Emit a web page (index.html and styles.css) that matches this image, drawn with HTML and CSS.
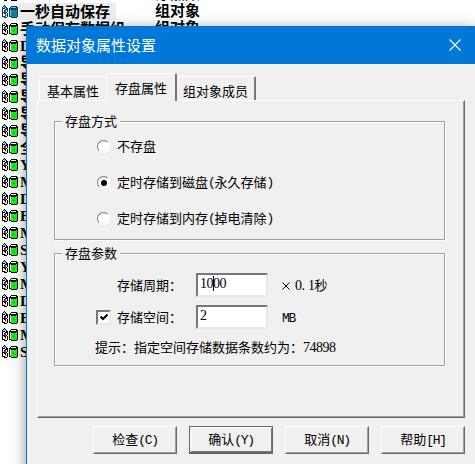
FILE: index.html
```html
<!DOCTYPE html>
<html lang="zh-CN">
<head>
<meta charset="utf-8">
<title>数据对象属性设置</title>
<link rel="stylesheet" href="styles.css">
</head>
<body>
<svg width="0" height="0" class="defs" aria-hidden="true">
  <symbol id="obj" viewBox="0 0 18 15" shape-rendering="crispEdges">
    <path d="M2 3h1v10h-1zM3 4h2v1h-2zM3 8h2v1h-2zM3 12h2v1h-2zM4 1h1v1h-1zM5 2h1v1h-1zM6 3h1v1h-1zM7 4h1v4h-1zM5 5h1v1h-1zM6 8h1v1h-1zM7 9h1v4h-1zM5 10h1v1h-1zM5 13h2v1h-2zM4 6h1v1h-1z"/>
    <path d="M3 2h1v1h-1zM6 4h1v2h-1zM4 9h2v1h-2zM4 13h1v1h-1z"/>
    <path class="cy" d="M4 2h1v2h-1zM5 3h1v1h-1z"/><path class="ma" d="M4 7h2v1h-2zM5 6h1v3h-1z"/><path class="ye" d="M5 11h2v1h-2zM5 12h1v1h-1z"/>
    <path d="M11 2h6v1h1v10h-1v1h-6v-1h-2v-9h1v-1h1z"/>
    <path class="body-fill" d="M10 5h7v8h-6v-1h-1z"/>
    <path class="shine" d="M11 3h5v1h-5zM10 6h1v6h-1z"/>
    <path d="M11 5h5v1h-5z"/>
    <path class="mark" d="M12 9h3v1h-3zM13 8h1v3h-1z"/>
  </symbol>
</svg>
<main class="desktop">
  <div class="list" id="list"></div>
  <section class="dialog">
    <header class="title"><span>数据对象属性设置</span>
      <svg class="close" viewBox="0 0 12 12"><path d="M.5.5l11 11M11.500.5l-11 11" stroke="#fff" stroke-width="1.1" fill="none"/></svg>
    </header>
    <div class="body">
      <nav class="tabs"><div class="tab first">基本属性</div><div class="tab active">存盘属性</div><div class="tab last">组对象成员</div></nav>
      <div class="panel">
        <div class="group mode"><div class="legend">存盘方式</div>
          <label class="option"><i class="radio"></i>不存盘</label>
          <label class="option"><i class="radio on"></i>定时存储到磁盘<b>(</b>永久存储<b>)</b></label>
          <label class="option"><i class="radio"></i>定时存储到内存<b>(</b>掉电清除<b>)</b></label>
        </div>
        <div class="group params"><div class="legend">存盘参数</div>
          <div class="row"><span class="name">存储周期：</span><div class="field num">10<i class="caret"></i>00</div><span class="unit"><svg class="times" viewBox="0 0 8 8"><path d="M.5.5l7 7M7.500.5l-7 7" stroke="#000" fill="none"/></svg><span class="num">0<span class="dot">.</span>1</span>秒</span></div>
          <div class="row"><span class="check"><svg viewBox="0 0 8 8"><path d="M.5 3.500L3 6L7.500 1.500" fill="none" stroke="#000" stroke-width="2"/></svg></span><span class="name">存储空间：</span><div class="field num">2</div><span class="unit"><b>MB</b></span></div>
          <div class="hint">提示：指定空间存储数据条数约为：<span class="num">74898</span></div>
        </div>
      </div>
      <footer class="actions"><div class="btn">检查<b>(C)</b></div><div class="btn default">确认<b>(Y)</b></div><div class="btn">取消<b>(N)</b></div><div class="btn">帮助<b>[H]</b></div></footer>
    </div>
  </section>
</main>
<script src="list.js"></script>
</body>
</html>
```
FILE: list.js
```js
const rows = [["", "浮点数"], ["一秒自动保存", "组对象"], ["手动保存数据组", "组对象"],
  "D", "导", "导", "导", "导", "导", "全", "Y", "M", "D", "B", "M", "S", "Y", "M", "D", "B", "M", "S"];
document.getElementById("list").innerHTML = rows.map((r, i) => {
  const [name, type] = Array.isArray(r) ? r : [r, ""];
  return `<div class="item${i === 1 ? " selected" : ""}"><svg class="icon"><use href="#obj"/></svg><span class="label">${name}</span><span class="type">${type}</span></div>`;
}).join("");
```
FILE: styles.css
```css
* { box-sizing: border-box; }
body { margin: 0; background: #fff; }
.defs { position: absolute; }
.desktop { position: relative; width: 475px; height: 464px; overflow: hidden; background: #fff; }
.list { margin-top: -14px; width: 240px; font: bold 15px/19px "Liberation Serif", "Noto Sans CJK SC", serif; color: #000; }
.item { display: flex; height: 17px; align-items: center; white-space: nowrap; }
.icon { width: 18px; height: 15px; flex: none; --c: #00e8e8; --m: #c000c0; --y: #e8e800; --g: #00ff00; --s: #fff; --k: #808080; fill: #000; }
.selected .icon { --c: #0080e0; --m: #6040c8; --y: #708070; --g: #0a8a80; --s: #80b8e8; --k: #406090; fill: #003c70; }
.cy { fill: var(--c); }
.ma { fill: var(--m); }
.ye { fill: var(--y); }
.body-fill { fill: var(--g); }
.shine { fill: var(--s); }
.mark { fill: var(--k); }
.label { flex: none; margin-left: 1px; padding-left: 1px; height: 17px; }
.type { position: absolute; left: 155px; }
.selected .label { background: #ececec; width: 97px; }
.dialog { position: absolute; left: 26px; top: 26px; width: 450px; height: 460px; background: #f0f0f0; border-left: 1px solid #0078d7; box-shadow: 0 3px 14px rgba(0,0,0,.42); }
.title { height: 38px; background: #0078d7; color: #fff; font: 15px/38px "Noto Sans CJK SC", sans-serif; padding: 0 15px 0 9px; display: flex; justify-content: space-between; align-items: center; }
.close { width: 12px; height: 12px; }
.body { padding: 9px 10px 0; font: 13px/16px "Liberation Serif", "Noto Sans CJK SC", serif; color: #000; }
b { font: 13px/16px "Liberation Mono", monospace; letter-spacing: -1.3px; }
.num { font-size: 14px; letter-spacing: -.5px; }
.tabs { display: flex; align-items: flex-end; height: 27px; padding-left: 2px; }
.tab { height: 24px; padding: 7px 0 0 7px; border: solid #fff; border-width: 1px 0 0 1px; border-radius: 2px 2px 0 0; white-space: nowrap; }
.first { width: 67px; }
.active { position: relative; width: 71px; height: 28px; margin-bottom: -1px; padding: 7px 0 0 8px; background: #f0f0f0; border-right: 2px solid; border-right-color: #777; }
.last { width: 79px; padding-left: 6px; border-left: 0; border-right: 2px solid #777; }
.panel { height: 318px; width: 428px; padding: 20px 18px 0 16px; border: 1px solid #fff; border-right: 1px solid #696969; border-bottom: 1px solid #696969; box-shadow: inset -1px -1px #a0a0a0; }
.group { position: relative; width: 391px; border: 1px solid #a0a0a0; box-shadow: 1px 1px 0 #fff, inset 1px 1px 0 #fff; }
.legend { position: absolute; left: 7px; top: -8px; padding: 0 3px; background: #f0f0f0; }
.mode { height: 119px; padding: 7px 0 0 42px; }
.option { display: flex; align-items: center; height: 36px; padding-bottom: 1px; }
.radio { width: 13px; height: 13px; margin-right: 7px; border-radius: 50%; background: #fff; border: 1.5px solid; border-color: #777 #fff #fff #777; display: flex; align-items: center; justify-content: center; }
.on::after { content: ""; width: 6px; height: 6px; border-radius: 50%; background: #000; }
.params { margin-top: 13px; height: 113px; padding-top: 19px; }
.row { display: flex; height: 24px; margin-bottom: 8px; align-items: center; padding-left: 62px; }
.name, .unit { padding-top: 2px; }
.name { width: 79px; }
.field { width: 72px; height: 24px; background: #fff; border: 2px solid; border-color: #777 #e8e8e8 #e8e8e8 #777; padding-left: 2px; line-height: 17px; display: flex; }
.unit { margin-left: 14px; }
.times { width: 8px; height: 8px; margin-right: 5px; }
.dot { display: inline-block; width: 6.5px; }
.caret { width: 1px; height: 15px; margin: 1px -1px 0 0; background: #000; }
.check { width: 15px; height: 15px; background: #fff; border: 2px solid; border-color: #777 #e8e8e8 #e8e8e8 #777; margin-left: -21px; margin-right: 6px; display: flex; align-items: center; justify-content: center; }
.check svg { width: 8px; height: 8px; }
.hint { padding: 3px 0 0 40px; }
.actions { display: flex; gap: 12px; margin: 8px 0 0 56px; }
.btn { flex: none; width: 84px; height: 28px; padding-top: 5px; text-align: center; border: 1px solid; border-color: #fff #696969 #696969 #fff; box-shadow: inset -1px -1px #a0a0a0; }
.default { border: 1px solid #666; border-bottom-width: 2px; box-shadow: inset 1px 1px #fff, inset -1px -1px #777; }
```
